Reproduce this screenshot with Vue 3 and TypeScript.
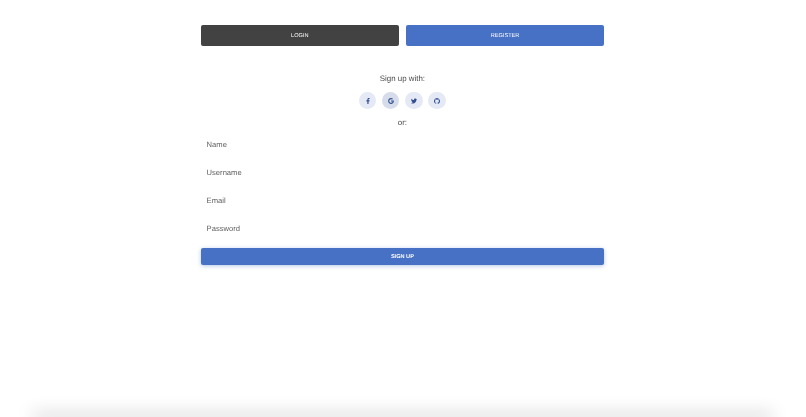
<script setup lang="ts">
interface Social { name: string; viewBox: string; d: string; active?: boolean }

const socials: Social[] = [
  { name: 'Facebook', viewBox: '0 0 320 512', d: 'M279.14 288l14.22-92.66h-88.91v-60.13c0-25.35 12.42-50.06 52.24-50.06h40.42V6.26S260.43 0 225.36 0c-73.22 0-121.08 44.38-121.08 124.72v70.62H22.89V288h81.39v224h100.17V288z' },
  { name: 'Google', active: true, viewBox: '0 0 488 512', d: 'M488 261.8C488 403.3 391.1 504 248 504 110.8 504 0 393.2 0 256S110.8 8 248 8c66.8 0 123 24.5 166.3 64.9l-67.5 64.9C258.5 52.6 94.3 116.6 94.3 256c0 86.5 69.1 156.6 153.7 156.6 98.2 0 135-70.4 140.8-106.9H248v-85.3h236.1c2.3 12.7 3.9 24.9 3.9 41.4z' },
  { name: 'Twitter', viewBox: '0 0 512 512', d: 'M459.37 151.716c.325 4.548.325 9.097.325 13.645 0 138.72-105.583 298.558-298.558 298.558-59.452 0-114.68-17.219-161.137-47.106 8.447.974 16.568 1.299 25.34 1.299 49.055 0 94.213-16.568 130.274-44.832-46.132-.975-84.792-31.188-98.112-72.772 6.498.974 12.995 1.624 19.818 1.624 9.421 0 18.843-1.3 27.614-3.573-48.081-9.747-84.143-51.98-84.143-102.985v-1.299c13.969 7.797 30.214 12.67 47.431 13.319-28.264-18.843-46.781-51.005-46.781-87.391 0-19.492 5.197-37.36 14.294-52.954 51.655 63.675 129.3 105.258 216.365 109.807-1.624-7.797-2.599-15.918-2.599-24.04 0-57.828 46.782-104.934 104.934-104.934 30.213 0 57.502 12.67 76.67 33.137 23.715-4.548 46.456-13.32 66.599-25.34-7.798 24.366-24.366 44.833-46.132 57.827 21.117-2.273 41.584-8.122 60.426-16.243-14.292 20.791-32.161 39.308-52.628 54.253z' },
  { name: 'GitHub', viewBox: '0 0 24 24', d: 'M12 .3a12 12 0 0 0-3.8 23.4c.6.1.8-.3.8-.6v-2.2c-3.3.7-4-1.4-4-1.4-.5-1.4-1.3-1.8-1.3-1.8-1.1-.7.1-.7.1-.7 1.2.1 1.8 1.2 1.8 1.2 1.1 1.8 2.8 1.3 3.5 1 .1-.8.4-1.3.8-1.6-2.7-.3-5.5-1.3-5.5-5.9 0-1.3.5-2.4 1.2-3.2-.1-.3-.5-1.5.1-3.2 0 0 1-.3 3.3 1.2a11.5 11.5 0 0 1 6 0c2.3-1.5 3.3-1.2 3.3-1.2.6 1.7.2 2.9.1 3.2.8.8 1.2 1.9 1.2 3.2 0 4.6-2.8 5.6-5.5 5.9.4.4.8 1.1.8 2.2v3.3c0 .3.2.7.8.6A12 12 0 0 0 12 .3z' },
]

const fields = [
  { placeholder: 'Name', type: 'text' },
  { placeholder: 'Username', type: 'text' },
  { placeholder: 'Email', type: 'email' },
  { placeholder: 'Password', type: 'password' },
]
</script>

<template>
  <div class="page">
    <main class="panel">
      <div class="tabs">
        <button class="btn tab dark" type="button">LOGIN</button>
        <button class="btn tab" type="button">REGISTER</button>
      </div>

      <form class="form" @submit.prevent>
        <p class="lead">Sign up with:</p>
        <div class="socials">
          <button
            v-for="s in socials"
            :key="s.name"
            class="social"
            :class="{ active: s.active }"
            type="button"
            :aria-label="s.name"
          >
            <svg :viewBox="s.viewBox" class="icon" aria-hidden="true"><path :d="s.d" fill="currentColor" /></svg>
          </button>
        </div>
        <p class="or">or:</p>

        <input
          v-for="f in fields"
          :key="f.placeholder"
          class="field"
          :type="f.type"
          :placeholder="f.placeholder"
        />

        <button class="btn submit" type="submit">SIGN UP</button>
      </form>
    </main>
    <div class="edge"></div>
  </div>
</template>

<style>
html, body { margin: 0; background: #fff; overflow: hidden; }
</style>

<style scoped>
.page {
  height: 417px;
  overflow: hidden;
  display: flex;
  flex-direction: column;
  font-family: "Liberation Sans", Arial, sans-serif;
  color: #4f4f4f;
  text-rendering: geometricPrecision;
}
.panel {
  flex: 1;
  box-sizing: border-box;
  width: 403.6px;
  margin-left: 200.6px;
  padding-top: 25px;
  filter: blur(0.4px);
}
.tabs {
  display: flex;
  gap: 7px;
}
.btn {
  box-sizing: border-box;
  border: 0;
  border-radius: 2px;
  padding: 1px 0 0;
  color: #fff;
  background: #4771c4;
  font: 5.6px "Liberation Sans", Arial, sans-serif;
  text-rendering: geometricPrecision;
}
.tab {
  flex: 1;
  height: 21px;
}
.dark {
  background: #424242;
}
.form {
  display: flex;
  flex-direction: column;
}
.lead, .or {
  margin: 0;
  text-align: center;
  font-size: 7.9px;
  line-height: 12px;
  color: #4a4a4a;
}
.lead {
  margin-top: 27px;
}
.socials {
  display: flex;
  justify-content: center;
  gap: 5.8px;
  margin-top: 7px;
}
.social {
  width: 17.3px;
  height: 17.3px;
  border: 0;
  border-radius: 50%;
  padding: 0;
  display: flex;
  align-items: center;
  justify-content: center;
  background: #e4e9f5;
  color: #34508f;
}
.social.active {
  background: #d6dcea;
}
.icon {
  height: 6px;
  width: 6px;
}
.or {
  margin-top: 7.5px;
  margin-bottom: 2px;
}
.field {
  display: block;
  box-sizing: border-box;
  height: 28px;
  width: 100%;
  border: 0;
  outline: 0;
  padding: 0 6px;
  background: transparent;
  font: 7.6px "Liberation Sans", Arial, sans-serif;
  text-rendering: geometricPrecision;
}
.field::placeholder {
  color: #606060;
  opacity: 1;
}
.submit {
  height: 17px;
  margin-top: 5px;
  font-weight: 700;
  box-shadow: 0 1px 4px rgba(71, 113, 196, 0.4);
}
.edge {
  height: 1px;
  margin: 0 36px -1px;
  flex: none;
  box-shadow: 0 0 18px 3px rgba(0, 0, 0, 0.22);
}
</style>
